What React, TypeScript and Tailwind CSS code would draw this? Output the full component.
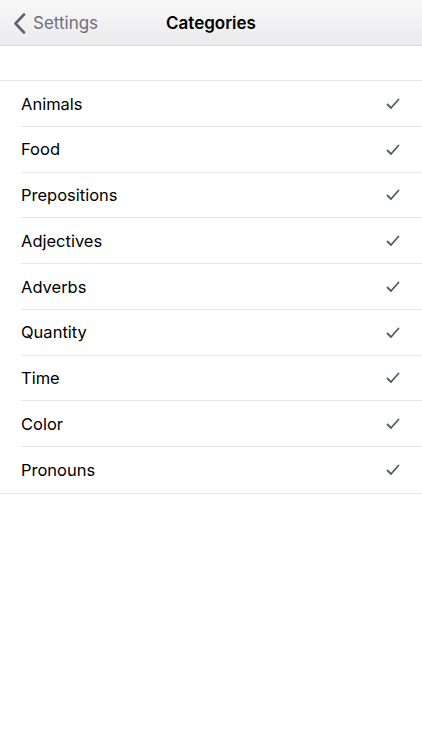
const categories = ['Animals', 'Food', 'Prepositions', 'Adjectives', 'Adverbs', 'Quantity', 'Time', 'Color', 'Pronouns']

function Check() {
  return (
    <svg width="14" height="12" viewBox="0 0 14 12" fill="none">
      <path d="M1.5 6.5 L5 10 L12.5 1.5" stroke="#555a69" strokeWidth="1.8" strokeLinecap="round" strokeLinejoin="round" />
    </svg>
  )
}

export default function App() {
  return (
    <div className="w-[422px] h-[750px] bg-white" style={{ fontFamily: 'Inter, "Liberation Sans", sans-serif' }}>
      {/* nav bar */}
      <div className="h-[46px] flex items-center relative border-b border-[#dcdcde] bg-gradient-to-b from-[#f8f8f9] to-[#ebebed]">
        <div className="flex items-center pl-[13px] gap-[7px] text-[#6c707d] text-[17px] pt-[2px]">
          <svg width="13" height="21" viewBox="0 0 13 21" fill="none">
            <path d="M11 1.5 L2.5 10.5 L11 19.5" stroke="#5f6371" strokeWidth="2.6" strokeLinecap="round" strokeLinejoin="round" />
          </svg>
          <span>Settings</span>
        </div>
        <div className="absolute inset-0 flex items-center justify-center pointer-events-none pt-[3px]">
          <span className="text-[17px] font-semibold text-black">Categories</span>
        </div>
      </div>

      <div className="h-[34px]" />

      <div className="border-t border-b border-[#e8e8ea]">
        {categories.map((c, i) => (
          <div key={c} className="pl-[21px]">
            <div className={`h-[45.75px] flex items-center justify-between pr-[22px] pt-[1px] ${i < categories.length - 1 ? 'border-b border-[#e8e8ea]' : ''}`}>
              <span className="text-[16.5px] text-black">{c}</span>
              <Check />
            </div>
          </div>
        ))}
      </div>
    </div>
  )
}
